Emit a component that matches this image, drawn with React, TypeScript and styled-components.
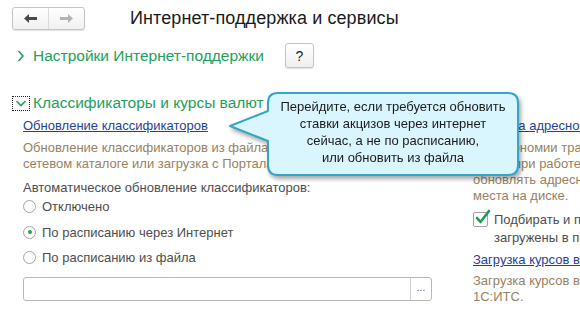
import React from 'react';
import styled, { createGlobalStyle } from 'styled-components';

const GlobalStyle = createGlobalStyle`
  html, body {
    margin: 0;
    padding: 0;
    background: #ffffff;
  }
  body {
    font-family: Arial, "Liberation Sans", sans-serif;
    font-size: 13px;
    color: #4d4d4d;
  }
`;

const colors = {
  green: '#22a05b',
  link: '#1f3f9a',
  note: '#978260',
  text: '#4d4d4d',
  border: '#b8b8b8',
};

// Page layout
const Page = styled.div`
  position: relative;
  width: 580px;
  height: 309px;
  overflow: hidden;
  padding: 7px 0 0 12px;
  box-sizing: border-box;
`;

const HeaderRow = styled.div`
  display: flex;
  align-items: center;
  height: 23px;
`;

const NavGroup = styled.div`
  display: flex;
  width: 73px;
  height: 23px;
  box-sizing: border-box;
  border: 1px solid #c4c4c4;
  border-radius: 3px;
  background: linear-gradient(#ffffff, #f1f1f1);
  box-shadow: 0 1px 1px rgba(0, 0, 0, 0.12);
`;

const NavButton = styled.div<{ $divider?: boolean }>`
  flex: 1;
  display: flex;
  align-items: center;
  justify-content: center;
  border-right: ${(p) => (p.$divider ? '1px solid #dadada' : 'none')};
`;

const Title = styled.h1`
  margin: 0 0 0 45px;
  font-size: 18px;
  font-weight: normal;
  color: #1a1a1a;
  line-height: 23px;
  letter-spacing: 0.1px;
`;

const SettingsRow = styled.div`
  display: flex;
  align-items: center;
  height: 25px;
  margin-top: 13px;
`;

const GroupTitle = styled.div`
  display: flex;
  align-items: center;
  color: ${colors.green};
  font-size: 15.5px;
  line-height: 18px;
`;

const ChevronWrap = styled.span<{ $focus?: boolean }>`
  display: inline-flex;
  align-items: center;
  justify-content: center;
  width: 18px;
  height: 15px;
  margin-right: 3px;
  box-sizing: border-box;
  border: ${(p) => (p.$focus ? '1px dotted #222' : '1px solid transparent')};
`;

const HelpButton = styled.div`
  width: 29px;
  height: 25px;
  margin-left: 21px;
  box-sizing: border-box;
  border: 1px solid #c4c4c4;
  border-radius: 3px;
  background: linear-gradient(#ffffff, #efefef);
  box-shadow: 0 1px 1px rgba(0, 0, 0, 0.12);
  display: flex;
  align-items: center;
  justify-content: center;
  font-size: 14px;
  color: #222;
`;

const SectionRow = styled.div`
  display: flex;
  align-items: center;
  height: 18px;
  margin-top: 26px;
`;

const Columns = styled.div`
  display: flex;
  margin-top: 6px;
  padding-left: 11px;
  gap: 41px;
`;

const LeftColumn = styled.div`
  width: 409px;
  flex: none;
  display: flex;
  flex-direction: column;
`;

const RightColumn = styled.div`
  flex: none;
  display: flex;
  flex-direction: column;
  white-space: nowrap;
`;

const Link = styled.a<{ $mt?: number }>`
  display: block;
  color: ${colors.link};
  text-decoration: underline;
  line-height: 16px;
  margin-top: ${(p) => p.$mt ?? 0}px;
  cursor: pointer;
`;

const Note = styled.div<{ $mt?: number }>`
  color: ${colors.note};
  line-height: 16px;
  margin-top: ${(p) => p.$mt ?? 6}px;
  white-space: nowrap;
`;

const Label = styled.div`
  color: ${colors.text};
  line-height: 16px;
  margin-top: 8px;
`;

const RadioGroup = styled.div`
  display: flex;
  flex-direction: column;
  margin-top: -2px;
`;

const RadioRow = styled.label`
  display: flex;
  align-items: center;
  height: 25.5px;
  color: ${colors.text};
`;

const RadioCircle = styled.span<{ $checked?: boolean }>`
  width: 13px;
  height: 13px;
  box-sizing: border-box;
  border: 1px solid #a3a3a3;
  border-radius: 50%;
  background: #fff;
  margin-right: 6px;
  display: flex;
  align-items: center;
  justify-content: center;

  &::after {
    content: '';
    display: ${(p) => (p.$checked ? 'block' : 'none')};
    width: 4px;
    height: 4px;
    border-radius: 50%;
    background: ${colors.green};
  }
`;

const InputBox = styled.div`
  display: flex;
  height: 24px;
  margin-top: 6px;
  box-sizing: border-box;
  border: 1px solid ${colors.border};
  border-radius: 3px;
  background: #fff;
`;

const InputField = styled.div`
  flex: 1;
`;

const ChoiceButton = styled.div`
  width: 21px;
  border-left: 1px solid #cfcfcf;
  display: flex;
  align-items: center;
  justify-content: center;
  font-size: 10px;
  color: #555;
  padding-bottom: 2px;
  box-sizing: border-box;
`;

const CheckRow = styled.div`
  display: flex;
  align-items: flex-start;
  margin-top: 7px;
`;

const CheckBox = styled.span`
  position: relative;
  width: 15px;
  height: 15px;
  flex: none;
  box-sizing: border-box;
  border: 1px solid #a3a3a3;
  border-radius: 2px;
  background: #fff;
  margin: 1px 6px 0 0;
`;

const CheckMark = styled.svg`
  position: absolute;
  left: 1px;
  top: -4px;
`;

const CheckText = styled.div`
  color: ${colors.text};
  line-height: 18px;
`;

// Callout overlay
const Callout = styled.div`
  position: absolute;
  left: 228px;
  top: 91px;
  width: 296px;
  height: 92px;
  filter: drop-shadow(2px 3px 2px rgba(0, 0, 0, 0.35));
`;

const CalloutShape = styled.svg`
  position: absolute;
  left: 0;
  top: 0;
`;

const CalloutText = styled.div`
  position: absolute;
  left: 40px;
  top: 7px;
  width: 250px;
  text-align: center;
  color: #1a1a1a;
  font-size: 13px;
  line-height: 17px;
`;

const Chevron = ({ down }: { down?: boolean }) => (
  <svg width="12" height="12" viewBox="0 0 12 12">
    {down ? (
      <polyline points="1.5,4 6,8.5 10.5,4" fill="none" stroke={colors.green} strokeWidth="1.6" />
    ) : (
      <polyline points="3.5,1 8,6 3.5,11" fill="none" stroke={colors.green} strokeWidth="1.6" />
    )}
  </svg>
);

const Arrow = ({ dir, color }: { dir: 'left' | 'right'; color: string }) => (
  <svg width="13" height="9" viewBox="0 0 13 9">
    <path
      d={dir === 'left' ? 'M0 4.5 L5 0 L5 3 L13 3 L13 6 L5 6 L5 9 Z' : 'M13 4.5 L8 0 L8 3 L0 3 L0 6 L8 6 L8 9 Z'}
      fill={color}
    />
  </svg>
);

const App: React.FC = () => {
  return (
    <>
      <GlobalStyle />
      <Page>
        <HeaderRow>
          <NavGroup>
            <NavButton $divider>
              <Arrow dir="left" color="#4a4a4a" />
            </NavButton>
            <NavButton>
              <Arrow dir="right" color="#b3b3b3" />
            </NavButton>
          </NavGroup>
          <Title>Интернет-поддержка и сервисы</Title>
        </HeaderRow>

        <SettingsRow>
          <GroupTitle>
            <ChevronWrap>
              <Chevron />
            </ChevronWrap>
            Настройки Интернет-поддержки
          </GroupTitle>
          <HelpButton>?</HelpButton>
        </SettingsRow>

        <SectionRow>
          <GroupTitle>
            <ChevronWrap $focus>
              <Chevron down />
            </ChevronWrap>
            Классификаторы и курсы валют
          </GroupTitle>
        </SectionRow>

        <Columns>
          <LeftColumn>
            <Link>Обновление классификаторов</Link>
            <Note>
              Обновление классификаторов из файла на локальном диске или
              <br />
              сетевом каталоге или загрузка с Портала 1С:ИТС.
            </Note>
            <Label>Автоматическое обновление классификаторов:</Label>
            <RadioGroup>
              <RadioRow>
                <RadioCircle />
                Отключено
              </RadioRow>
              <RadioRow>
                <RadioCircle $checked />
                По расписанию через Интернет
              </RadioRow>
              <RadioRow>
                <RadioCircle />
                По расписанию из файла
              </RadioRow>
            </RadioGroup>
            <InputBox>
              <InputField />
              <ChoiceButton>...</ChoiceButton>
            </InputBox>
          </LeftColumn>

          <RightColumn>
            <Link>Загрузка адресного классификатора</Link>
            <Note>
              Для экономии трафика и ускорения
              <br />
              и сети при работе с адресами рекомендуется
              <br />
              обновлять адресные сведения. Требуется
              <br />
              места на диске.
            </Note>
            <CheckRow>
              <CheckBox>
                <CheckMark width="16" height="16" viewBox="0 0 16 16">
                  <polyline
                    points="2,9 5.5,13 14,2"
                    fill="none"
                    stroke="#1f9d55"
                    strokeWidth="2.6"
                    strokeLinecap="round"
                    strokeLinejoin="round"
                  />
                </CheckMark>
              </CheckBox>
              <CheckText>
                Подбирать и помнить адреса, которые
                <br />
                загружены в программу
              </CheckText>
            </CheckRow>
            <Link $mt={5}>Загрузка курсов валют</Link>
            <Note $mt={5}>
              Загрузка курсов валют с Портала
              <br />
              1С:ИТС.
            </Note>
          </RightColumn>
        </Columns>

        <Callout>
          <CalloutShape width="296" height="92" viewBox="0 0 296 92">
            <path
              d="M50 2 H280 Q290 2 290 12 V74 Q290 84 280 84 H50 Q40 84 40 74 V50 L2 35 L40 20 V12 Q40 2 50 2 Z"
              fill="#d9f5fd"
              stroke="#33a5c6"
              strokeWidth="2"
              strokeLinejoin="round"
            />
          </CalloutShape>
          <CalloutText>
            Перейдите, если требуется обновить
            <br />
            ставки акцизов через интернет
            <br />
            сейчас, а не по расписанию,
            <br />
            или обновить из файла
          </CalloutText>
        </Callout>
      </Page>
    </>
  );
};

export default App;
